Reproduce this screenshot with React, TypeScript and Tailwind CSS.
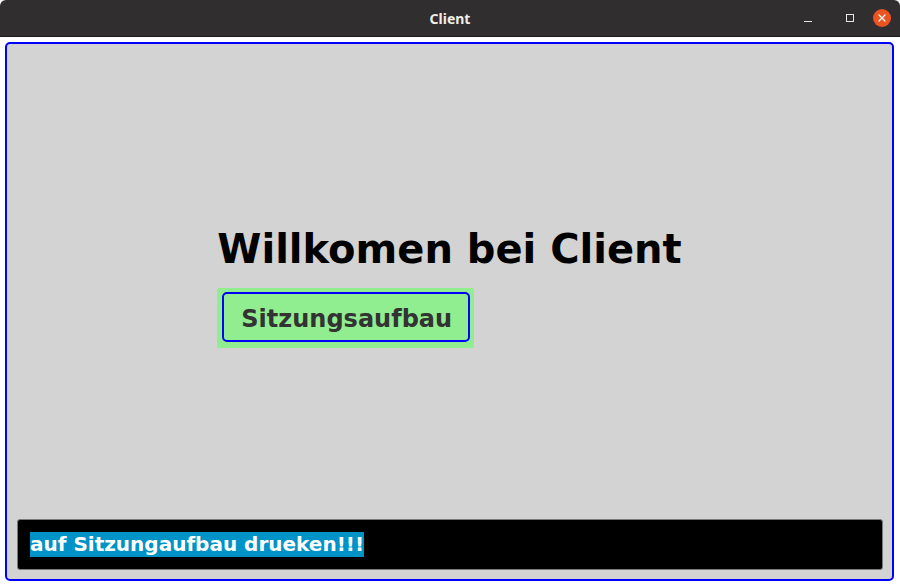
import { X } from 'lucide-react'

export default function App() {
  return (
    <div className="w-[900px] h-[587px] bg-white flex flex-col overflow-hidden" style={{ fontFamily: '"DejaVu Sans", sans-serif' }}>
      {/* title bar */}
      <div className="h-[37px] shrink-0 bg-[#302e2e] border-b border-[#1c1b1b] rounded-t-[6px] flex items-center relative">
        <span className="absolute left-0 right-0 text-center text-[14px] font-bold text-[#f0ede8]" style={{ fontFamily: '"Noto Sans", sans-serif' }}>
          Client
        </span>
        <div className="ml-auto flex items-center gap-[19px] pr-[9px]">
          <div className="w-[8px] h-[1px] bg-[#e8e6e3] mt-[6px]" />
          <div className="w-[8px] h-[8px] border border-[#e8e6e3] ml-[15px]" />
          <div className="w-[18px] h-[18px] rounded-full bg-[#e95420] flex items-center justify-center">
            <X className="w-3 h-3 text-white" strokeWidth={2.5} />
          </div>
        </div>
      </div>

      {/* main panel */}
      <div className="flex-1 mt-[5px] ml-[5px] mr-[6px] mb-[6px] border-2 border-[#0000ff] rounded-[5px] bg-[#d3d3d3] flex flex-col">
        <div className="flex-1 flex justify-center pt-[181px]">
          <div className="flex flex-col items-start">
            <h1 className="text-[40px] font-bold text-black leading-[48px]">Willkomen bei Client</h1>
            <div className="mt-[15px] bg-[#90ee90] rounded-[2px] pt-[4px] pb-[6px] pl-[5px] pr-[4px]">
              <button className="border-2 border-[#0000ff] rounded-[5px] h-[50px] pt-[3px] pl-[17px] pr-[16px] text-[24px] font-bold text-[#333333]">
                Sitzungsaufbau
              </button>
            </div>
          </div>
        </div>
        <div className="h-[51px] mb-[9px] ml-[10px] mr-[9px] bg-black border border-[#7a7a7a] rounded-[3px] flex items-center pl-[12px]">
          <span className="bg-[#0093c8] text-white font-bold text-[20px] leading-[25px]">
            auf Sitzungaufbau drueken!!!
          </span>
        </div>
      </div>
    </div>
  )
}
